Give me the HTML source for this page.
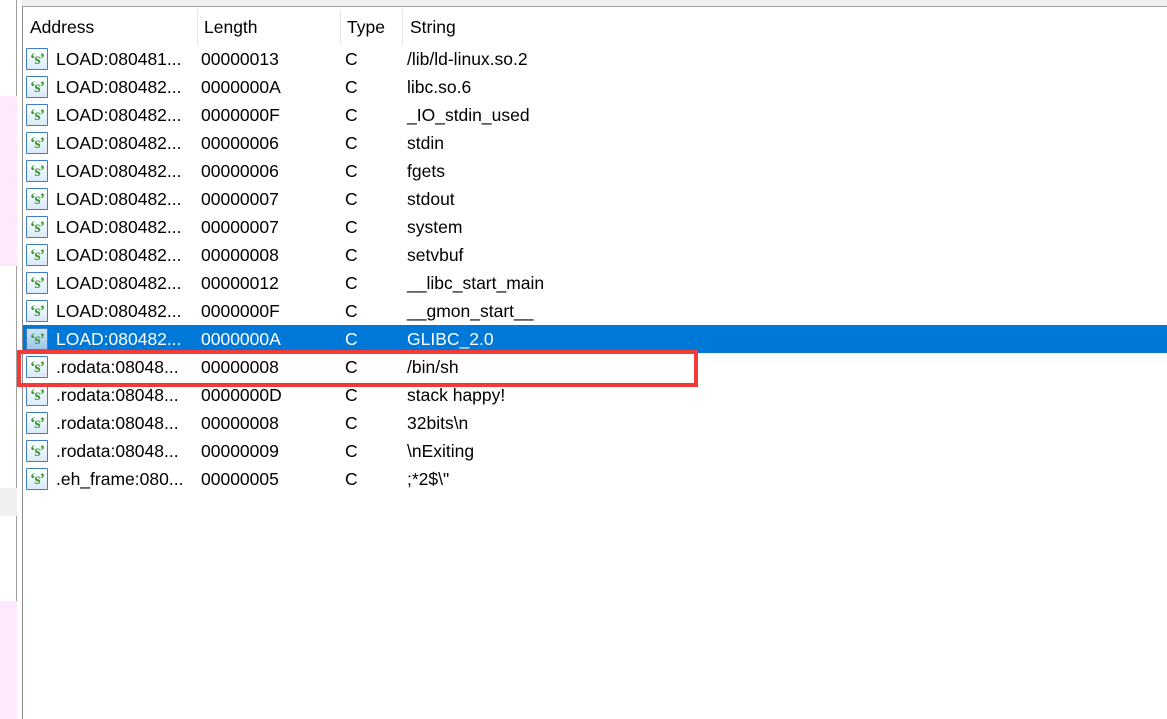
<!DOCTYPE html>
<html><head><meta charset="utf-8"><style>
*{margin:0;padding:0;box-sizing:border-box}
body{width:1167px;height:719px;overflow:hidden;background:#fff;position:relative;font-family:"Liberation Sans","Noto Sans CJK SC",sans-serif;font-size:17.5px;color:#000}
.topbar{position:absolute;left:22px;top:0;width:1145px;height:7px;background:#f0f0f0;border-bottom:1px solid #a0a0a0}
.leftstrip{position:absolute;left:0;top:0;width:17px;height:719px;background:#fff;border-right:1px solid #a0a0a0}
.pink{position:absolute;left:0;width:17px;background:#fde8fd}
.panel{position:absolute;left:22px;top:7px;width:1145px;height:712px;border-left:1px solid #8a8a8a;background:#fff}
.hdr{position:absolute;top:12px;height:30px;line-height:30px}
.sep{position:absolute;top:10px;width:1px;height:35px;background:#e5e5e5}
.row{position:absolute;left:23px;width:1144px;height:28px;line-height:28px;white-space:nowrap}
.row span{position:absolute;top:0}
.sel{background:#0078d7;color:#fff}
.ic{position:absolute;left:3px;top:3px;width:22px;height:22px;border:1px solid #3a7fc8;background:linear-gradient(#ffffff,#d8ecf8);border-radius:1px}
.ic b{position:absolute;left:0;top:0;width:20px;height:20px;color:#3a9a2a;font:bold 16px "Liberation Serif",serif;text-align:center;line-height:21px;letter-spacing:-1px}
.sel .ic{background:linear-gradient(#cfe3f5,#9cc6ea)}
.red{position:absolute;left:17px;top:350px;width:681px;height:37px;border:4px solid #f23a3a}
</style></head><body>
<div class="topbar"></div>
<div class="leftstrip"></div>
<div class="pink" style="top:96px;height:170px"></div>
<div class="pink" style="top:488px;height:28px;background:#f0f0f0"></div>
<div class="pink" style="top:601px;height:118px"></div>
<div class="panel"></div>
<div class="hdr" style="left:30px">Address</div>
<div class="hdr" style="left:204px">Length</div>
<div class="hdr" style="left:347px">Type</div>
<div class="hdr" style="left:410px">String</div>
<div class="sep" style="left:197px"></div>
<div class="sep" style="left:340px"></div>
<div class="sep" style="left:402px"></div>

<div class="row" style="top:45px"><div class="ic"><b>‘s’</b></div><span style="left:33px">LOAD:080481...</span><span style="left:178px">00000013</span><span style="left:322px">C</span><span style="left:384px">/lib/ld-linux.so.2</span></div>
<div class="row" style="top:73px"><div class="ic"><b>‘s’</b></div><span style="left:33px">LOAD:080482...</span><span style="left:178px">0000000A</span><span style="left:322px">C</span><span style="left:384px">libc.so.6</span></div>
<div class="row" style="top:101px"><div class="ic"><b>‘s’</b></div><span style="left:33px">LOAD:080482...</span><span style="left:178px">0000000F</span><span style="left:322px">C</span><span style="left:384px">_IO_stdin_used</span></div>
<div class="row" style="top:129px"><div class="ic"><b>‘s’</b></div><span style="left:33px">LOAD:080482...</span><span style="left:178px">00000006</span><span style="left:322px">C</span><span style="left:384px">stdin</span></div>
<div class="row" style="top:157px"><div class="ic"><b>‘s’</b></div><span style="left:33px">LOAD:080482...</span><span style="left:178px">00000006</span><span style="left:322px">C</span><span style="left:384px">fgets</span></div>
<div class="row" style="top:185px"><div class="ic"><b>‘s’</b></div><span style="left:33px">LOAD:080482...</span><span style="left:178px">00000007</span><span style="left:322px">C</span><span style="left:384px">stdout</span></div>
<div class="row" style="top:213px"><div class="ic"><b>‘s’</b></div><span style="left:33px">LOAD:080482...</span><span style="left:178px">00000007</span><span style="left:322px">C</span><span style="left:384px">system</span></div>
<div class="row" style="top:241px"><div class="ic"><b>‘s’</b></div><span style="left:33px">LOAD:080482...</span><span style="left:178px">00000008</span><span style="left:322px">C</span><span style="left:384px">setvbuf</span></div>
<div class="row" style="top:269px"><div class="ic"><b>‘s’</b></div><span style="left:33px">LOAD:080482...</span><span style="left:178px">00000012</span><span style="left:322px">C</span><span style="left:384px">__libc_start_main</span></div>
<div class="row" style="top:297px"><div class="ic"><b>‘s’</b></div><span style="left:33px">LOAD:080482...</span><span style="left:178px">0000000F</span><span style="left:322px">C</span><span style="left:384px">__gmon_start__</span></div>
<div class="row sel" style="top:325px"><div class="ic"><b>‘s’</b></div><span style="left:33px">LOAD:080482...</span><span style="left:178px">0000000A</span><span style="left:322px">C</span><span style="left:384px">GLIBC_2.0</span></div>
<div class="row" style="top:353px"><div class="ic"><b>‘s’</b></div><span style="left:33px">.rodata:08048...</span><span style="left:178px">00000008</span><span style="left:322px">C</span><span style="left:384px">/bin/sh</span></div>
<div class="row" style="top:381px"><div class="ic"><b>‘s’</b></div><span style="left:33px">.rodata:08048...</span><span style="left:178px">0000000D</span><span style="left:322px">C</span><span style="left:384px">stack happy!</span></div>
<div class="row" style="top:409px"><div class="ic"><b>‘s’</b></div><span style="left:33px">.rodata:08048...</span><span style="left:178px">00000008</span><span style="left:322px">C</span><span style="left:384px">32bits\n</span></div>
<div class="row" style="top:437px"><div class="ic"><b>‘s’</b></div><span style="left:33px">.rodata:08048...</span><span style="left:178px">00000009</span><span style="left:322px">C</span><span style="left:384px">\nExiting</span></div>
<div class="row" style="top:465px"><div class="ic"><b>‘s’</b></div><span style="left:33px">.eh_frame:080...</span><span style="left:178px">00000005</span><span style="left:322px">C</span><span style="left:384px">;*2$\"</span></div>
<div class="red"></div>
</body></html>
